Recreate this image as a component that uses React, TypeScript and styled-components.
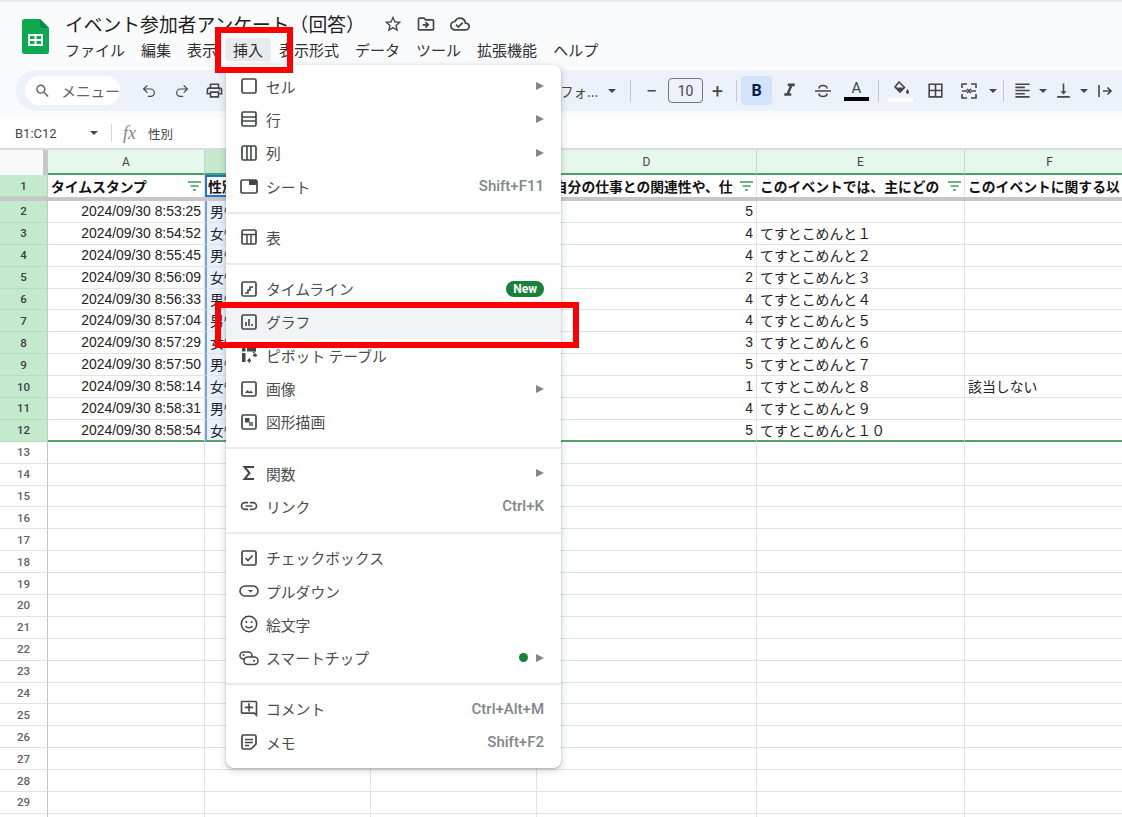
import React from "react";
import styled, { createGlobalStyle } from "styled-components";
import { Undo2, Redo2 } from "lucide-react";
import {
  MdSearch,
  MdOutlineLocalPrintshop,
  MdStarBorder,
  MdOutlineDriveFileMove,
  MdOutlineCloudDone,
  MdFormatItalic,
  MdBorderAll,
  MdFormatAlignLeft,
  MdVerticalAlignBottom,
  MdLink,
  MdOutlineAddComment,
} from "react-icons/md";

const JP = `"Noto Sans CJK JP", sans-serif`;
const LATIN = `Roboto, "Noto Sans CJK JP", sans-serif`;
const GRID = "#e2e3e3";

const GlobalStyle = createGlobalStyle`
  html, body {
    margin: 0;
    width: 1122px;
    height: 817px;
    overflow: hidden;
    background: #fff;
    font-family: ${JP};
    text-spacing-trim: space-all;
  }
`;

const Page = styled.div`
  position: relative;
  width: 1122px;
  height: 817px;
  overflow: hidden;
`;

const Header = styled.header`
  height: 118px;
  box-sizing: border-box;
  background: #f9fbfd;
  border-top: 2px solid #e9eff1;
`;

const TitleArea = styled.div`
  display: flex;
  height: 68px;
  padding-left: 22px;
  gap: 16px;
`;

const Logo = styled.svg`
  width: 27px;
  height: 35px;
  margin-top: 17px;
  flex: none;
`;

const TitleColumn = styled.div`
  display: flex;
  flex-direction: column;
  padding-top: 7px;
`;

const TitleRow = styled.div`
  display: flex;
  align-items: center;
  height: 29px;
  color: #444746;
`;

const Title = styled.span`
  font-size: 18.8px;
  color: #1f1f1f;
  white-space: nowrap;
  width: 311px;
`;

const TitleIcon = styled.span`
  display: flex;
  justify-content: center;
  width: 33.5px;
  font-size: 20px;
`;

const MenuBar = styled.nav`
  display: flex;
  height: 23px;
  margin-left: -8px;
`;

const MenuBarItem = styled.span<{ $active?: boolean }>`
  padding: 0 8px;
  font-size: 15px;
  line-height: 23px;
  color: #303134;
  border-radius: 4px;
  white-space: nowrap;
  background: ${(p) => (p.$active ? "#e8eaed" : "transparent")};
`;

const Toolbar = styled.div`
  display: flex;
  align-items: center;
  height: 41px;
  margin-left: 16px;
  padding-left: 9px;
  background: #edf2fa;
  border-radius: 20px 0 0 20px;
  color: #444746;
`;

const SearchPill = styled.div`
  display: flex;
  align-items: center;
  gap: 10px;
  width: 95px;
  height: 29px;
  box-sizing: border-box;
  padding-left: 9px;
  flex: none;
  background: #fff;
  border-radius: 15px;
  font-size: 14.7px;
  color: #5f6368;
  white-space: nowrap;
`;

const ToolButton = styled.span<{ $w?: number; $on?: boolean }>`
  display: flex;
  align-items: center;
  justify-content: center;
  width: ${(p) => p.$w ?? 33}px;
  height: 29px;
  flex: none;
  font-size: 19px;
  border-radius: 4px;
  background: ${(p) => (p.$on ? "#d3e3fd" : "transparent")};
`;

const Bold = styled(ToolButton)`
  margin-right: 1px;
  color: #041e49;
  font: 700 16px ${LATIN};
`;

const LeftTools = styled.div`
  display: flex;
  margin-left: 12px;
`;

const RightTools = styled.div`
  display: flex;
  align-items: center;
  margin-left: auto;
  width: 562px;
  flex: none;
`;

const FontName = styled.span`
  width: 38px;
  font-size: 13.5px;
  white-space: nowrap;
  color: #444746;
`;

const Caret = styled.i`
  display: block;
  width: 0;
  height: 0;
  border: 4px solid transparent;
  border-top: 4.5px solid #444746;
  border-bottom: 0;
`;

const ToolDivider = styled.i`
  display: block;
  width: 1px;
  height: 22px;
  margin: 0 4px;
  flex: none;
  background: #c7c7c7;
`;

const SizeBox = styled.span`
  display: flex;
  align-items: center;
  justify-content: center;
  width: 35px;
  height: 25px;
  box-sizing: border-box;
  flex: none;
  border: 1px solid #747775;
  border-radius: 4px;
  font: 14px ${LATIN};
`;

const SignButton = styled(ToolButton)`
  font: 400 20px ${LATIN};
`;

const ColorText = styled.span<{ $bar: string }>`
  display: flex;
  flex-direction: column;
  align-items: center;
  width: 35px;
  flex: none;
  font: 400 15px/15px ${LATIN};

  &::after {
    content: "";
    width: 25px;
    height: 4px;
    margin-top: 1px;
    background: ${(p) => p.$bar};
  }
`;

const FillSwatch = styled(ColorText)`
  line-height: 17px;
`;

const FormulaBar = styled.div`
  display: flex;
  align-items: center;
  height: 32px;
  box-sizing: border-box;
  padding-left: 15px;
  color: #444746;
  border-bottom: 2px solid #dcdcdc;
`;

const NameBox = styled.span`
  width: 75px;
  font: 13px ${LATIN};
`;

const FormulaDivider = styled.i`
  display: block;
  width: 1px;
  height: 18px;
  margin: 0 11px 0 13px;
  background: #d5d5d5;
`;

const Fx = styled.span`
  width: 25px;
  font: italic 18px "Liberation Serif", serif;
  color: #80868b;
`;

const FormulaText = styled.span`
  font-size: 12.5px;
`;

const Sheet = styled.div`
  display: flex;
  flex-direction: column;
`;

const Row = styled.div<{ $h: number }>`
  display: grid;
  grid-template-columns: 48px 157px 166px 166px 220px 208px 170px;
  height: ${(p) => p.$h}px;
`;

const Corner = styled.div`
  box-sizing: border-box;
  background: #f8f9fa;
  border-right: 5px solid #c7c7c7;
`;

const ColumnHead = styled.div<{ $on?: boolean }>`
  display: flex;
  align-items: center;
  justify-content: center;
  box-sizing: border-box;
  font: 12px ${LATIN};
  color: #444746;
  background: ${(p) => (p.$on ? "#c4eacd" : "#e6f7ec")};
  border-right: 1px solid #c7d5ca;
  border-bottom: 2px solid #4d9e66;
`;

const RowHead = styled.div<{ $on: boolean }>`
  display: flex;
  align-items: center;
  justify-content: center;
  box-sizing: border-box;
  font: 500 11.5px ${LATIN};
  color: ${(p) => (p.$on ? "#3c4043" : "#5f6368")};
  background: ${(p) => (p.$on ? "#c4eacd" : "#fff")};
  border-right: 1px solid #c7c7c7;
  border-bottom: 1px solid ${(p) => (p.$on ? "#b6dcc0" : GRID)};
`;

const FrozenRow = styled(Row)`
  border-bottom: 4px solid #c7c7c7;
  box-sizing: content-box;
`;

const HeadCell = styled.div<{ $picked?: boolean }>`
  display: flex;
  align-items: center;
  gap: 5px;
  min-width: 0;
  padding: 0 3px 1px 3px;
  box-sizing: border-box;
  font-size: 13.8px;
  font-weight: 700;
  color: #111;
  white-space: nowrap;
  border-right: 1px solid ${GRID};
  ${(p) => p.$picked && "outline: 2px solid #1a73e8; outline-offset: -2px;"}
`;

const HeadText = styled.span`
  flex: 1;
  min-width: 0;
  overflow: hidden;
`;

const FilterIcon = styled.svg`
  width: 13px;
  height: 10px;
  flex: none;
`;

const Cell = styled.div<{ $num?: boolean; $picked?: boolean; $end?: boolean; $edge?: boolean }>`
  box-sizing: border-box;
  padding: 0 3px;
  overflow: hidden;
  white-space: nowrap;
  font: 13.9px/20px ${JP};
  color: #222;
  text-align: ${(p) => (p.$num ? "right" : "left")};
  background: ${(p) => (p.$picked ? "#e8f0fd" : "#fff")};
  border-right: 1px solid ${GRID};
  border-bottom: ${(p) => (p.$end ? "2px solid #5a9e70" : `1px solid ${GRID}`)};
  border-left: ${(p) => (p.$edge ? "2px solid #6fa3ea" : "0")};
`;

const Stamp = styled(Cell)`
  font: 13.9px/21px "Liberation Sans", sans-serif;
`;

const Menu = styled.div`
  position: absolute;
  left: 226px;
  top: 65px;
  width: 335px;
  height: 703px;
  box-sizing: border-box;
  padding-top: 4.5px;
  background: #fff;
  border-radius: 8px;
  box-shadow: 0 2px 6px 2px rgba(60, 64, 67, 0.15), 0 1px 2px rgba(60, 64, 67, 0.3);
`;

const MenuItem = styled.div<{ $hover?: boolean }>`
  display: flex;
  align-items: center;
  height: 33.3px;
  padding: 0 17px 0 13px;
  color: #4a4c4e;
  background: ${(p) => (p.$hover ? "#f1f3f4" : "transparent")};
`;

const MenuGlyph = styled.svg`
  width: 20px;
  height: 20px;
  flex: none;
  margin-right: 7px;
  color: #444746;
`;

const MenuLinkIcon = styled(MdLink)`
  width: 20px;
  height: 20px;
  flex: none;
  margin-right: 7px;
`;

const MenuLabel = styled.span`
  flex: 1;
  font-size: 14.8px;
  white-space: nowrap;
`;

const Shortcut = styled.span`
  font: 500 15px ${LATIN};
  color: #80868b;
`;

const SubArrow = styled.i`
  display: block;
  width: 0;
  height: 0;
  border: 4.5px solid transparent;
  border-left: 8px solid #80868b;
  border-right: 0;
`;

const NewBadge = styled.span`
  padding: 0 7px;
  height: 16px;
  border-radius: 8px;
  background: #188038;
  color: #fff;
  font: 700 12px/16px ${LATIN};
`;

const GreenDot = styled.i`
  display: block;
  width: 9px;
  height: 9px;
  margin-right: 8px;
  border-radius: 50%;
  background: #188038;
`;

const MenuRule = styled.hr`
  height: 2px;
  margin: 9px 0 7px;
  border: 0;
  background: #e8eaed;
`;

const InsertMark = styled.div`
  position: absolute;
  left: 215px;
  top: 27px;
  width: 78px;
  height: 46px;
  box-sizing: border-box;
  border: 6px solid #ff0000;
`;

const ChartMark = styled.div`
  position: absolute;
  left: 215px;
  top: 302px;
  width: 364px;
  height: 46px;
  box-sizing: border-box;
  border: 6px solid #ff0000;
`;

// outline glyphs for the insert menu, all on a 20 box
const box = <rect x="3" y="3" width="14" height="14" rx="1.5" fill="none" stroke="currentColor" strokeWidth="1.7" />;
const glyphs: Record<string, React.ReactNode> = {
  cell: box,
  row: <>{box}<path d="M3 8h14M3 12h14" stroke="currentColor" strokeWidth="1.6" /></>,
  col: <>{box}<path d="M8 3v14M12 3v14" stroke="currentColor" strokeWidth="1.6" /></>,
  sheet: (
    <>
      <rect x="2" y="4" width="16" height="13" rx="1.5" fill="none" stroke="currentColor" strokeWidth="1.7" />
      <rect x="10" y="4" width="8" height="5" fill="currentColor" />
    </>
  ),
  table: <>{box}<path d="M3 7.5h14M8 7.5V17M12 7.5V17" stroke="currentColor" strokeWidth="1.5" /></>,
  timeline: <>{box}<path d="M6 14h3v-3h2V8h3" fill="none" stroke="currentColor" strokeWidth="1.6" /></>,
  chart: <>{box}<path d="M7 14v-4M10 14V7M13 14v-2" stroke="currentColor" strokeWidth="1.6" /></>,
  pivot: (
    <>
      <rect x="3" y="3" width="3.5" height="3.5" fill="currentColor" />
      <rect x="8" y="3" width="9" height="3.5" fill="currentColor" />
      <rect x="3" y="8" width="3.5" height="9" fill="currentColor" />
      <path d="M9 15.5h3M16 9v3M14 8l2-1.5M11 13.5l-2 2 2 2M14 11l2-2 2 2" fill="none" stroke="currentColor" strokeWidth="1.4" />
    </>
  ),
  image: <>{box}<path d="M6 14l2.5-3 2 2 1.5-1.5 2 2.5z" fill="currentColor" /></>,
  drawing: (
    <>
      {box}
      <rect x="6" y="6" width="4.5" height="4.5" fill="currentColor" />
      <rect x="10" y="10" width="4" height="4" fill="currentColor" opacity="0.7" />
    </>
  ),
  sigma: <path d="M15 4H5.5L10.5 10l-5 6H15" fill="none" stroke="currentColor" strokeWidth="2" />,
  check: <>{box}<path d="M6.5 10l2.5 2.5 4.5-5" fill="none" stroke="currentColor" strokeWidth="1.6" /></>,
  pulldown: (
    <>
      <rect x="1" y="5" width="18" height="10" rx="5" fill="none" stroke="currentColor" strokeWidth="1.6" />
      <path d="M9 9h5l-2.5 2.5z" fill="currentColor" />
    </>
  ),
  smile: (
    <>
      <circle cx="10" cy="10" r="7.7" fill="none" stroke="currentColor" strokeWidth="1.6" />
      <circle cx="7.3" cy="8" r="1.1" fill="currentColor" />
      <circle cx="12.7" cy="8" r="1.1" fill="currentColor" />
      <path d="M6.5 12c1.8 2.4 5.2 2.4 7 0" fill="none" stroke="currentColor" strokeWidth="1.5" />
    </>
  ),
  chip: (
    <>
      <rect x="1" y="4" width="12" height="7" rx="3.5" fill="none" stroke="currentColor" strokeWidth="1.5" />
      <rect x="5" y="9" width="14" height="7.5" rx="3.7" fill="#fff" stroke="currentColor" strokeWidth="1.5" />
      <circle cx="4.5" cy="7" r="1" fill="currentColor" />
      <circle cx="15" cy="12.7" r="1" fill="currentColor" />
    </>
  ),
  note: (
    <>
      <path d="M4.500 3h11A1.500 1.500 0 0 1 17 4.500V12l-5 5H4.500A1.500 1.500 0 0 1 3 15.500v-11A1.500 1.500 0 0 1 4.500 3z" fill="none" stroke="currentColor" strokeWidth="1.7" />
      <path d="M6 7.500h8M6 10.500h8M6 13.500h4" stroke="currentColor" strokeWidth="1.4" />
    </>
  ),
};

const Glyph = ({ name }: { name: string }) => <MenuGlyph viewBox="0 0 20 20">{glyphs[name]}</MenuGlyph>;

type Item = { icon: string; label: string; sub?: boolean; keys?: string; hover?: boolean; badge?: boolean; dot?: boolean };

const menuGroups: Item[][] = [
  [
    { icon: "cell", label: "セル", sub: true },
    { icon: "row", label: "行", sub: true },
    { icon: "col", label: "列", sub: true },
    { icon: "sheet", label: "シート", keys: "Shift+F11" },
  ],
  [{ icon: "table", label: "表" }],
  [
    { icon: "timeline", label: "タイムライン", badge: true },
    { icon: "chart", label: "グラフ", hover: true },
    { icon: "pivot", label: "ピボット テーブル" },
    { icon: "image", label: "画像", sub: true },
    { icon: "drawing", label: "図形描画" },
  ],
  [
    { icon: "sigma", label: "関数", sub: true },
    { icon: "link", label: "リンク", keys: "Ctrl+K" },
  ],
  [
    { icon: "check", label: "チェックボックス" },
    { icon: "pulldown", label: "プルダウン" },
    { icon: "smile", label: "絵文字" },
    { icon: "chip", label: "スマートチップ", sub: true, dot: true },
  ],
  [
    { icon: "comment", label: "コメント", keys: "Ctrl+Alt+M" },
    { icon: "note", label: "メモ", keys: "Shift+F2" },
  ],
];

const menuNames = ["ファイル", "編集", "表示", "挿入", "表示形式", "データ", "ツール", "拡張機能", "ヘルプ"];

const records = [
  ["2024/09/30 8:53:25", "男性", 5, ""],
  ["2024/09/30 8:54:52", "女性", 4, "てすとこめんと１"],
  ["2024/09/30 8:55:45", "男性", 4, "てすとこめんと２"],
  ["2024/09/30 8:56:09", "女性", 2, "てすとこめんと３"],
  ["2024/09/30 8:56:33", "男性", 4, "てすとこめんと４"],
  ["2024/09/30 8:57:04", "男性", 4, "てすとこめんと５"],
  ["2024/09/30 8:57:29", "女性", 3, "てすとこめんと６"],
  ["2024/09/30 8:57:50", "男性", 5, "てすとこめんと７"],
  ["2024/09/30 8:58:14", "女性", 1, "てすとこめんと８"],
  ["2024/09/30 8:58:31", "男性", 4, "てすとこめんと９"],
  ["2024/09/30 8:58:54", "女性", 5, "てすとこめんと１０"],
];

const Filter = () => (
  <FilterIcon viewBox="0 0 13 10">
    <path d="M0 1h13M2.500 5h8M5 9h3" stroke="#3f9d5c" strokeWidth="1.500" />
  </FilterIcon>
);

const heads = [
  "タイムスタンプ",
  "性別",
  "年代",
  "ご自分の仕事との関連性や、仕",
  "このイベントでは、主にどの",
  "このイベントに関する以",
];

const App: React.FC = () => {
  const emptyRows = Array.from({ length: 18 }, (_, i) => i + 13);

  return (
    <Page>
      <GlobalStyle />
      <Header>
        <TitleArea>
          <Logo viewBox="0 0 27 35">
            <path d="M2.500 0H18l9 9v23.500a2.500 2.500 0 0 1-2.500 2.500h-22A2.500 2.500 0 0 1 0 32.500v-30A2.500 2.500 0 0 1 2.500 0z" fill="#0ea84f" />
            <path d="M18 0l9 9h-7a2 2 0 0 1-2-2z" fill="#0a8a40" />
            <path d="M6 15h15v12H6zM8 17v3h4.500v-3zm6.500 0v3H19v-3zM8 22v3h4.500v-3zm6.500 0v3H19v-3z" fill="#fff" fillRule="evenodd" />
          </Logo>
          <TitleColumn>
            <TitleRow>
              <Title>イベント参加者アンケート（回答）</Title>
              <TitleIcon><MdStarBorder /></TitleIcon>
              <TitleIcon><MdOutlineDriveFileMove /></TitleIcon>
              <TitleIcon><MdOutlineCloudDone /></TitleIcon>
            </TitleRow>
            <MenuBar>
              {menuNames.map((name) => (
                <MenuBarItem key={name} $active={name === "挿入"}>{name}</MenuBarItem>
              ))}
            </MenuBar>
          </TitleColumn>
        </TitleArea>
        <Toolbar>
          <SearchPill><MdSearch size={20} />メニュー</SearchPill>
          <LeftTools>
            <ToolButton><Undo2 size={16} strokeWidth={1.8} /></ToolButton>
            <ToolButton><Redo2 size={16} strokeWidth={1.8} /></ToolButton>
            <ToolButton><MdOutlineLocalPrintshop /></ToolButton>
          </LeftTools>
          <RightTools>
            <FontName>フォ...</FontName>
            <ToolButton $w={28}><Caret /></ToolButton>
            <ToolDivider />
            <SignButton>−</SignButton>
            <SizeBox>10</SizeBox>
            <SignButton $w={29}>+</SignButton>
            <ToolDivider />
            <Bold $on $w={31}>B</Bold>
            <ToolButton><MdFormatItalic size={21} /></ToolButton>
            <ToolButton>
              <svg width="20" height="20" viewBox="0 0 20 20">
                <path d="M2 10h16M6 7.500C6 3.500 14 3.500 14 7.500M6 12.500C6 16.500 14 16.500 14 12.500" fill="none" stroke="currentColor" strokeWidth="1.600" />
              </svg>
            </ToolButton>
            <ColorText $bar="#000">A</ColorText>
            <ToolDivider />
            <FillSwatch $bar="#fff">
              <svg width="18" height="17" viewBox="0 0 18 17">
                <path d="M7 2l5.500 5.500L8 12 3 7z" fill="none" stroke="currentColor" strokeWidth="1.600" />
                <path d="M3.500 7.500h8.500L8 12z" fill="currentColor" />
                <path d="M15.500 9c1 1.600 1.500 2.400 1.500 3.200a1.500 1.500 0 0 1-3 0c0-.8.500-1.600 1.500-3.200z" fill="currentColor" />
              </svg>
            </FillSwatch>
            <ToolButton $w={34}><MdBorderAll /></ToolButton>
            <ToolButton $w={34}>
              <svg width="20" height="20" viewBox="0 0 20 20">
                <path d="M3 7V3h5M17 7V3h-5M3 13v4h5M17 13v4h-5M3 10h5M12 10h5M8 8l2 2-2 2M12 8l-2 2 2 2" fill="none" stroke="currentColor" strokeWidth="1.600" />
              </svg>
            </ToolButton>
            <ToolButton $w={13}><Caret /></ToolButton>
            <ToolDivider />
            <ToolButton $w={28}><MdFormatAlignLeft /></ToolButton>
            <ToolButton $w={13}><Caret /></ToolButton>
            <ToolButton $w={28}><MdVerticalAlignBottom /></ToolButton>
            <ToolButton $w={13}><Caret /></ToolButton>
            <ToolButton $w={30}>
              <svg width="18" height="18" viewBox="0 0 18 18">
                <path d="M3 3v12M7 9h8M11.500 5.500L15 9l-3.500 3.500" fill="none" stroke="currentColor" strokeWidth="1.600" />
              </svg>
            </ToolButton>
          </RightTools>
        </Toolbar>
      </Header>

      <FormulaBar>
        <NameBox>B1:C12</NameBox>
        <Caret />
        <FormulaDivider />
        <Fx>fx</Fx>
        <FormulaText>性別</FormulaText>
      </FormulaBar>

      <Sheet>
        <Row $h={25}>
          <Corner />
          {["A", "B", "C", "D", "E", "F"].map((c) => (
            <ColumnHead key={c} $on={c === "B" || c === "C"}>{c}</ColumnHead>
          ))}
        </Row>
        <FrozenRow $h={22}>
          <RowHead $on>1</RowHead>
          {heads.map((h, i) => (
            <HeadCell key={h} $picked={i === 1}>
              <HeadText>{h}</HeadText>
              {i !== 1 && i !== 5 && <Filter />}
            </HeadCell>
          ))}
        </FrozenRow>
        {records.map(([stamp, gender, score, note], i) => {
          const end = i === records.length - 1;
          return (
            <Row key={String(stamp)} $h={21.9}>
              <RowHead $on>{i + 2}</RowHead>
              <Stamp $num $end={end}>{stamp}</Stamp>
              <Cell $picked $edge $end={end}>{gender}</Cell>
              <Cell $picked $end={end} />
              <Stamp $num $end={end}>{score}</Stamp>
              <Cell $end={end}>{note}</Cell>
              <Cell $end={end}>{i === 8 ? "該当しない" : ""}</Cell>
            </Row>
          );
        })}
        {emptyRows.map((n) => (
          <Row key={n} $h={21.9}>
            <RowHead $on={false}>{n < 30 ? n : ""}</RowHead>
            <Cell /><Cell /><Cell /><Cell /><Cell /><Cell />
          </Row>
        ))}
      </Sheet>

      <Menu>
        {menuGroups.map((group, g) => (
          <React.Fragment key={g}>
            {g > 0 && <MenuRule />}
            {group.map((item) => (
              <MenuItem key={item.label} $hover={item.hover}>
                {item.icon === "link" ? (
                  <MenuLinkIcon />
                ) : item.icon === "comment" ? (
                  <MenuLinkIcon as={MdOutlineAddComment} />
                ) : (
                  <Glyph name={item.icon} />
                )}
                <MenuLabel>{item.label}</MenuLabel>
                {item.keys && <Shortcut>{item.keys}</Shortcut>}
                {item.badge && <NewBadge>New</NewBadge>}
                {item.dot && <GreenDot />}
                {item.sub && <SubArrow />}
              </MenuItem>
            ))}
          </React.Fragment>
        ))}
      </Menu>

      <InsertMark />
      <ChartMark />
    </Page>
  );
};

export default App;
